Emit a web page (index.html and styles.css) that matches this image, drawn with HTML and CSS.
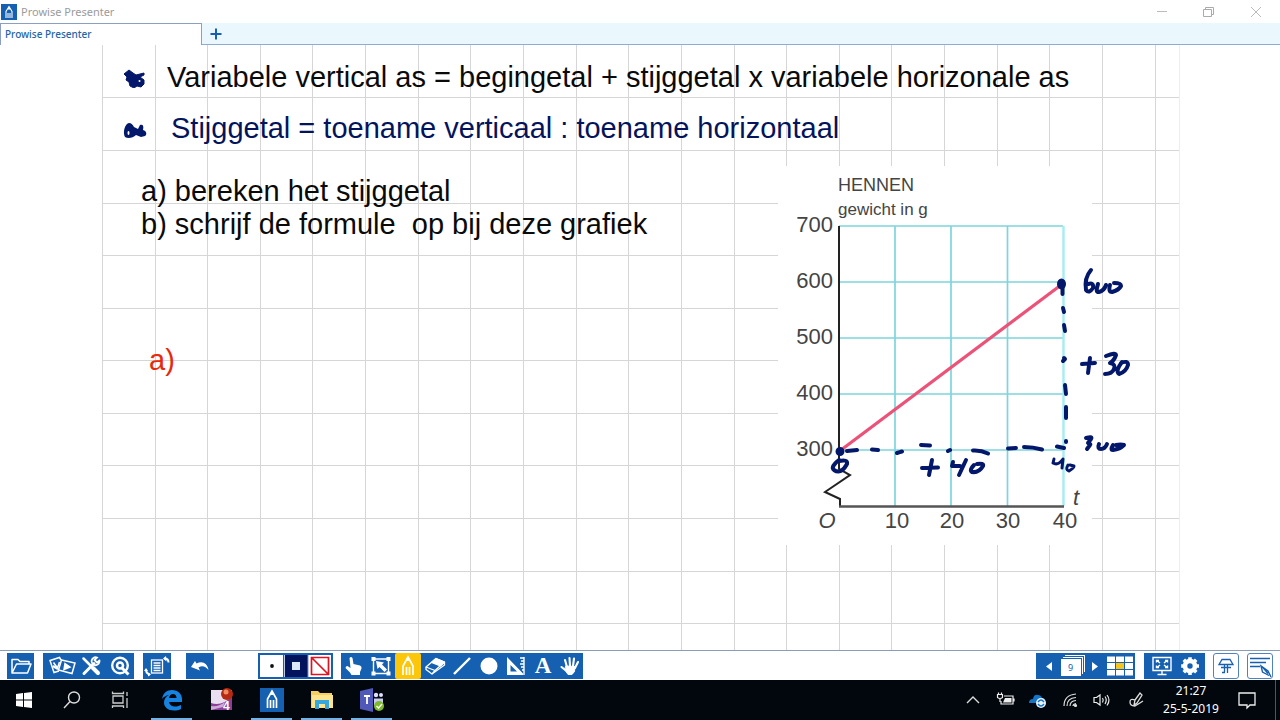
FILE: index.html
```html
<!DOCTYPE html>
<html lang="nl">
<head>
<meta charset="utf-8">
<meta name="viewport" content="width=device-width, initial-scale=1">
<title>Prowise Presenter</title>
<link rel="stylesheet" href="styles.css">
</head>
<body>
<header class="titlebar">
  <svg class="app-logo" width="16" height="16" viewBox="0 0 16 16"><rect width="16" height="16" fill="#1560b0"/><path d="M5 14V7.500l3-5 3 5V14M7 14V9M9 14V9M8 3v3" fill="none" stroke="#fff" stroke-width="1.100"/></svg>
  <span class="app-title">Prowise Presenter</span>
  <div class="window-controls">
    <button type="button" aria-label="Minimaliseren"><svg width="12" height="12" viewBox="0 0 12 12"><path d="M1 5.500h10" stroke="#bbb"/></svg></button>
    <button type="button" aria-label="Verkleinen"><svg width="12" height="12" viewBox="0 0 12 12" fill="none" stroke="#aaa"><path d="M0.500 3.500h8v7h-8zM2.500 3V1.500h8v7H9"/></svg></button>
    <button type="button" aria-label="Sluiten"><svg width="12" height="12" viewBox="0 0 12 12"><path d="M1 1l10 10M11 1L1 11" stroke="#bbb"/></svg></button>
  </div>
</header>
<nav class="tabs">
  <button type="button" class="tab">Prowise Presenter</button>
  <button type="button" class="new-tab" aria-label="Nieuw tabblad"><svg width="12" height="12" viewBox="0 0 12 12"><path d="M6 0.500v11M0.500 6h11" stroke="#1560b0" stroke-width="2"/></svg></button>
</nav>
<main class="stage">
  <section class="board">
    <svg class="board-grid" aria-hidden="true">
      <defs><pattern id="squares" width="1000" height="1000" patternUnits="userSpaceOnUse">
        <path d="M0.500 0V1000M53.500 0V1000M105.500 0V1000M158.500 0V1000M210.500 0V1000M263.500 0V1000M316.500 0V1000M368.500 0V1000M421.500 0V1000M474.500 0V1000M526.500 0V1000M579.500 0V1000M632.500 0V1000M684.500 0V1000M737.500 0V1000M789.500 0V1000M842.500 0V1000M895.500 0V1000M947.500 0V1000M0 52.500H1000M0 105.500H1000M0 158.500H1000M0 210.500H1000M0 263.500H1000M0 315.500H1000M0 368.500H1000M0 420.500H1000M0 473.500H1000M0 526.500H1000M0 578.500H1000M0 631.500H1000M0 684.500H1000M0 736.500H1000M0 789.500H1000M0 842.500H1000M0 894.500H1000M0 947.500H1000" stroke="#d6d6d6"/>
      </pattern></defs>
      <rect width="100%" height="100%" fill="url(#squares)"/>
    </svg>
    <div class="notes">
      <p class="rule"><svg class="blob" width="24" height="20" viewBox="0 0 24 20"><path d="M1 6l5-4 4 3 3 2 8-2v2l-4 2 4 3v4l-3 3-4-1-3 2-4-2-1-4-3-2 1-3z" fill="#04186b" stroke="#04186b" stroke-linejoin="round"/><circle cx="16.500" cy="13" r="1" fill="#fff"/></svg><span>Variabele vertical as = begingetal + stijggetal x variabele horizonale as</span></p>
      <p class="rule rule-blue"><svg class="blob" width="24" height="20" viewBox="0 0 24 20"><path d="M2 18c-2-4-1-10 2-13 2-2 5-1 7 3l4 2 2-4c3-1 4 1 3 5 4 1 4 5 2 6l-4 1-5-2c-3 3-8 4-11 2z" fill="#04186b"/><ellipse cx="5.500" cy="14" rx="1" ry="2" fill="#fff"/></svg><span>Stijggetal = toename verticaal : toename horizontaal</span></p>
      <p class="task">a) bereken het stijggetal<br>b) schrijf de formule&nbsp; op bij deze grafiek</p>
      <p class="answer">a)</p>
    </div>
    <svg class="chart" width="380" height="379" viewBox="778 166 380 379" role="img" aria-label="Hennen, gewicht in g">
      <rect x="778" y="166" width="314" height="379" fill="#fff"/>
      <path d="M839 226H1063M839 282H1063M839 338H1063M839 394H1063M839 450H1063M895 226V506M951 226V506M1007.500 226V506" fill="none" stroke="#7ed5dc" stroke-width="1.700"/>
      <path d="M1063.500 226V506" stroke="#a4edf0" stroke-width="2.400"/>
      <path d="M839 226V469L850 475L825 492L840 499V506" fill="none" stroke="#222" stroke-width="2"/>
      <path d="M839 506.500H1064" stroke="#555" stroke-width="2.400"/>
      <path d="M841 450L1065 282" stroke="#ec5277" stroke-width="3.200"/>
      <g class="chart-head"><text x="838" y="191">HENNEN</text></g>
      <g class="chart-sub"><text x="838" y="215">gewicht in g</text></g>
      <g class="chart-num chart-y"><text x="833" y="232">700</text><text x="833" y="288">600</text><text x="833" y="344">500</text><text x="833" y="400">400</text><text x="833" y="456">300</text></g>
      <g class="chart-num chart-x"><text x="897" y="528">10</text><text x="952" y="528">20</text><text x="1008" y="528">30</text><text x="1065" y="528">40</text></g>
      <g class="chart-num chart-x chart-it"><text x="827" y="528">O</text><text x="1076" y="505">t</text></g>
      <g class="ink">
        <path d="M847 451L857 450M872 449.500L878 450M897 453Q900 452 902 451.500M921 445L930 445.500M948 451L950 450M973 450.500Q981 450 988 453.500M1008 448.500L1016 448M1024 447Q1033 447 1042 449.500M1057 446.500L1064 448"/>
        <path d="M1062.500 288V294M1063 308L1064 312M1064 325L1065 331M1064 358L1065 359L1063 361M1065 385L1066 394M1066 407V418M1066 441V442"/>
        <circle cx="840" cy="451.500" r="3"/><ellipse cx="1061.500" cy="284" rx="3" ry="4"/>
        <path d="M839 460Q830 467 834 470Q841 475 847 464Q848 459 839 461"/>
        <path d="M922 468L938 467.500M932 460L929 475M953 462L952 466L960 466M966 460L959 475M974 465Q969 470 972 472Q979 473 983 466Q984 463 977 464"/>
        <path class="fine" d="M1054 459L1053 463Q1058 466 1063 459L1062 468M1068 465Q1065 470 1069 471Q1074 468 1074 466L1070 465"/>
        <path d="M1091 270Q1084 278 1086 290Q1089 294 1093 288Q1094 282 1088 284M1098 284Q1095 293 1099 292Q1104 291 1106 285M1110 285Q1108 292 1112 292Q1119 290 1121 286Q1121 283 1114 283"/>
        <path d="M1082 364L1095 363M1090 358L1088 373M1106 356Q1116 352 1116 355Q1114 361 1110 363Q1116 364 1114 369Q1112 374 1105 374M1122 362Q1115 371 1119 374Q1126 372 1128 365Q1128 360 1121 363"/>
        <path d="M1086 438Q1093 436 1091 439L1088 443Q1091 444 1090 445L1087 449M1099 444Q1097 449 1101 449Q1105 449 1107 444M1113 445Q1110 450 1113 450Q1120 449 1124 445Q1121 444 1116 445"/>
      </g>
    </svg>
  </section>
</main>
<div class="toolbar">
  <div class="group w27"><button type="button" aria-label="Openen"><svg viewBox="0 0 24 24" fill="none" stroke="#fff" stroke-width="1.500" stroke-linejoin="round"><path d="M3 19V5.500h6l2 2h9V10M3 19h15.500l3.500-9H7.500z"/></svg></button></div>
  <div class="group group-media">
    <button type="button" aria-label="Media"><svg class="wide" viewBox="0 0 28 24" fill="none" stroke="#fff" stroke-width="1.500"><path d="M13 6L11.500 3.500 2 6.500l4 12 5-1.500M5.500 8.500l4 5.500 2-6"/><path d="M13.500 6L27 9l-3 10.500-13.500-3.500z"/><path d="M17 9.500l5 3.500-6 2.500z" fill="#fff"/><path d="M5 12l5 3" stroke-width="2.500"/></svg></button>
    <button type="button" aria-label="Gereedschap"><svg viewBox="0 0 24 24" fill="none" stroke="#fff" stroke-linecap="round"><path d="M4.500 4.500L12 12" stroke-width="2.500"/><path d="M14 14l5 5" stroke-width="4"/><path d="M5 19.500L15 9.500" stroke-width="3"/><path d="M20.500 6.500L18 8.500l-2.500-2.500L18 3.500a4 4 0 1 0 2.500 3" stroke-width="1.800"/></svg></button>
    <button type="button" aria-label="Zoeken"><svg viewBox="0 0 24 24" fill="none" stroke="#fff"><circle cx="12" cy="11.500" r="7.800" stroke-width="2.400"/><circle cx="12" cy="11.500" r="3" stroke-width="2.500"/><path d="M14 14l6.500 6.500" stroke-width="3"/></svg></button>
  </div>
  <div class="group w28"><button type="button" aria-label="Pagina draaien"><svg class="wide" viewBox="0 0 28 24" fill="none" stroke="#fff" stroke-width="1.300"><rect x="8.500" y="6" width="11" height="13"/><path d="M10.500 9h7M10.500 11.500h7M10.500 14h7M10.500 16.500h7"/><path d="M21.500 4.500q4 0 4 4M3 15q0 5 4 5.500" stroke-width="2"/><path d="M23 2l-3 2.500 3.500 3zM1 17l2-3 2 3zM5 18.500l3 2-3 2z" fill="#fff" stroke="none"/></svg></button></div>
  <div class="group w28 group-undo"><button type="button" aria-label="Ongedaan maken"><svg viewBox="0 0 24 24"><path d="M3 13l4-6 1.500 2.500c6-3 11 0 12 6.500-3-4-6.500-5-10-2.500l1.500 3z" fill="#fff"/></svg></button></div>
  <div class="group group-colors">
    <button type="button" class="swatch" aria-label="Dikte"><svg viewBox="0 0 24 24"><circle cx="12" cy="12" r="1.900" fill="#111"/></svg></button>
    <button type="button" class="swatch swatch-navy" aria-label="Lijnkleur"><svg viewBox="0 0 24 24"><path d="M8 8h8v8H8z" fill="#dce6fa"/></svg></button>
    <button type="button" class="swatch" aria-label="Geen vulling"><svg viewBox="0 0 24 24"><path d="M3.500 3.500h17v17h-17zL20.500 20.500" fill="none" stroke="#e11220" stroke-width="1.700"/></svg></button>
  </div>
  <div class="group group-tools">
    <button type="button" aria-label="Aanwijzen"><svg viewBox="0 0 24 24"><path d="M7.500 4q1.500-2 3 0l1 6 6.500 1.500q2 1 1.500 3L18 18v3H9.500L8 18.500 3.500 14q0-2 2-2l3 2z" fill="#fff"/></svg></button>
    <button type="button" aria-label="Selecteren"><svg viewBox="0 0 24 24"><path d="M4.500 5h15v14.500h-15z" fill="none" stroke="#fff" stroke-width="1.400"/><path d="M2.500 3h4v4h-4zM17.500 3h4v4h-4zM2.500 17.500h4v4h-4zM17.500 17.500h4v4h-4zM7 7l8 1.500-2 2 5 5-2.500 2.500-5-5-2 2z" fill="#fff"/></svg></button>
    <button type="button" class="active" aria-label="Pen"><svg viewBox="0 0 24 24" fill="none" stroke="#fff" stroke-width="1.700"><path d="M7 21v-9l5-9 5 9v9M10.500 21v-8M13.500 21v-8M12 4v3"/></svg></button>
    <button type="button" aria-label="Gum"><svg viewBox="0 0 24 24" fill="none" stroke="#fff" stroke-width="1.300" stroke-linejoin="round"><path d="M3 13L13 4.500l8.500 3.500-9.500 8.500z"/><path d="M8.500 8.500l9 3.500 4-4L13 4.500z" fill="#fff"/><path d="M3 13v2.500l6 4.500 3-3.500M9 20l12.500-9V8"/></svg></button>
    <button type="button" aria-label="Lijn"><svg viewBox="0 0 24 24"><path d="M4 20L20 4" stroke="#fff" stroke-width="2.400"/></svg></button>
    <button type="button" aria-label="Vorm"><svg viewBox="0 0 24 24"><circle cx="12" cy="12" r="8.500" fill="#fff"/></svg></button>
    <button type="button" aria-label="Geodriehoek"><svg viewBox="0 0 24 24"><path d="M3 3l16 16.500v1.500H3zM6.500 11v6.500H13z" fill="#fff" fill-rule="evenodd"/><path d="M20 3v18M16 4h4M17 7h3M16 10h4M17 13h3M18 16h2" stroke="#fff" stroke-width="1.400"/></svg></button>
    <button type="button" class="letter">A</button>
    <button type="button" aria-label="Hand"><svg viewBox="0 0 24 24" fill="none" stroke="#fff" stroke-linecap="round" stroke-width="2.100"><path d="M9 13L7 6M12 12l-.5-8M15 12l1-7.500M17 14l3-6M8.500 17l-5-4"/><path d="M8 12l9 .5-.5 5-2.500 3h-4L7 16z" fill="#fff" stroke-width="1"/></svg></button>
  </div>
  <div class="group group-pages">
    <button type="button" class="arrow" aria-label="Vorige pagina"><svg viewBox="0 0 24 24"><path d="M15 8v9l-6-4.500z" fill="#fff"/></svg></button>
    <button type="button" class="page-no"><span>9</span></button>
    <button type="button" class="arrow" aria-label="Volgende pagina"><svg viewBox="0 0 24 24"><path d="M9 8v9l6-4.500z" fill="#fff"/></svg></button>
    <button type="button" class="overview" aria-label="Overzicht"><svg class="wide" viewBox="0 0 28 24"><path d="M1 2.500h26v19H1z" fill="#fff"/><path d="M10 9h8v6h-8z" fill="#f7c51a"/><path d="M1 8.500h26M1 15.500h26M9.500 2v20M18.500 2v20" stroke="#1560b0"/></svg></button>
  </div>
  <div class="group group-screen">
    <button type="button" aria-label="Volledig scherm"><svg viewBox="0 0 24 24" fill="none" stroke="#fff" stroke-width="1.400"><path d="M3 3.500h18v13H3zM12 17v3M7.500 20.500h9"/><path d="M7 6.500l3 2.500M17 6.500L14 9M7 13.500l3-2.500M17 13.500L14 11M6.500 8.500v-2H9M15 6.500h2.500v2M6.500 11.500v2H9M15 13.500h2.500v-2"/></svg></button>
    <button type="button" aria-label="Instellingen"><svg viewBox="0 0 24 24" fill="none" stroke="#fff"><circle cx="12" cy="12" r="5" stroke-width="4.600"/><path d="M12 3.200v4M12 17v4M3.200 12h4M17 12h4M5.800 5.800l3 3M15.300 15.300l3 3M18.200 5.800l-3 3M8.800 15.300l-3 3" stroke-width="3.600"/></svg></button>
  </div>
  <button type="button" class="outlined" aria-label="Gereedschapskist"><svg viewBox="0 0 24 24" fill="none" stroke="#1560b0" stroke-width="1.300"><path d="M8 5.500h8l3 5H5zM7 13.500h10M10.500 11v7M13.500 11v8M8 18.500h3"/></svg></button>
  <button type="button" class="outlined" aria-label="Notities"><svg viewBox="0 0 24 24" fill="none" stroke="#1560b0" stroke-width="1.400"><path d="M2 4.500h20M2 8.500h16M2 12.500h10M23 23l-3-6-7-5 1.500 6 6.500 3.500M14 12.500l6 7"/></svg></button>
</div>
<footer class="taskbar">
  <button type="button" class="sys" aria-label="Start"><svg viewBox="0 0 24 24"><path d="M4 6l7-1v6.500H4zM12 5l8-1v7.500h-8zM4 12.500h7V19l-7-1zM12 12.500h8V20l-8-1z" fill="#fff"/></svg></button>
  <button type="button" class="sys" aria-label="Zoeken"><svg viewBox="0 0 24 24" fill="none" stroke="#ddd" stroke-width="1.400"><circle cx="14" cy="9.500" r="5.500"/><path d="M10 13.500L4 20"/></svg></button>
  <button type="button" class="sys sys-view" aria-label="Taakweergave"><svg viewBox="0 0 24 24" fill="none" stroke="#ccc" stroke-width="1.300"><path d="M5 8h10v7H5zM4.500 3.500v2h11v-2M4.500 20v-2h11v2M19 4v4M19 10v10"/></svg></button>
  <button type="button" class="app running" aria-label="Edge"><svg viewBox="0 0 24 24"><path d="M2 11C3 5 7 2 12 2c6 0 10 4 10 9v3H9c.5 3 3 4.500 6 4.500 2.500 0 4.500-.6 6-1.500v4c-2 1-4.500 1.500-7 1.500-6 0-10-3.500-10-8 0-3.500 2-6 5-7.500-3 .5-5.500 2-7 4zM9 10h7.500c0-2.500-1.500-4-3.500-4s-3.500 1.500-4 4z" fill="#1683e0"/></svg></button>
  <button type="button" class="app" aria-label="Presentatie 4"><svg viewBox="0 0 24 24"><path d="M1 2h21v20H1z" fill="#e9dff0"/><path d="M1 15q11 4 21-7v14H1z" fill="#8c3d99"/><path d="M1 18q8 1 14-4l-2 5-12 3z" fill="#cfaad5"/><circle cx="17" cy="6" r="6" fill="#b52a12"/><circle cx="16" cy="4" r="2.500" fill="#f18b63"/><text x="13" y="22" class="icon-four">4</text></svg></button>
  <button type="button" class="app running" aria-label="Prowise Presenter"><svg viewBox="0 0 24 24"><path d="M0 0h24v24H0z" fill="#1560b0"/><path d="M7.500 20v-9L12 3l4.500 8v9M10.500 20v-8M13.500 20v-8M12 3v4" fill="none" stroke="#fff" stroke-width="1.700"/></svg></button>
  <button type="button" class="app running" aria-label="Verkenner"><svg viewBox="0 0 24 24"><path d="M1 3h7l2 2h12v15H1z" fill="#f5cf62"/><path d="M2 7h21v13H2z" fill="#fde48f"/><path d="M5 12h14v9h-4v-5H9v5H5z" fill="#38a8dc"/></svg></button>
  <button type="button" class="app running" aria-label="Teams"><svg class="wide" viewBox="0 0 28 24"><path d="M2 3l13-3v24L2 21z" fill="#5059b8"/><path d="M6 8h6M9 8v8" stroke="#fff" stroke-width="1.800"/><circle cx="18" cy="7" r="2.200" fill="#dfe0ff"/><circle cx="23" cy="7" r="2" fill="#dfe0ff"/><path d="M16 10.500h9v7h-9z" fill="#c9cbf0"/><circle cx="21" cy="18" r="5" fill="#7cba2c"/><path d="M18.500 18l2 2 3.500-4" fill="none" stroke="#fff" stroke-width="1.400"/></svg></button>
  <div class="tray">
    <button type="button" aria-label="Meer"><svg viewBox="0 0 24 24"><path d="M6 15l6-6 6 6" fill="none" stroke="#ddd" stroke-width="1.400"/></svg></button>
    <button type="button" aria-label="Batterij"><svg viewBox="0 0 24 24" fill="none" stroke="#eee" stroke-width="1.200"><path d="M11 8h9v8H8v-3M21 10.500v3"/><path d="M12 10h6.500v4.500H10z" fill="#eee" stroke="none"/><path d="M4.500 6.500h5v3q-2.500 2-5 0zM7 11v3M5.500 4.500v2M8.500 4.500v2"/></svg></button>
    <button type="button" aria-label="OneDrive"><svg viewBox="0 0 24 24"><path d="M4 15q0-4 4-4 1-5 5-4 3 0 4 3 4 0 3 5z" fill="#1474c8"/><circle cx="16" cy="15" r="5" fill="#e9f4ff"/><path d="M13 14q3-4 6 0M13 16q3 4 6 0" fill="none" stroke="#1474c8" stroke-width="1.300"/></svg></button>
    <button type="button" aria-label="Netwerk"><svg viewBox="0 0 24 24" fill="none" stroke="#ddd" stroke-width="1.200"><path d="M7 18Q7 7 19 6M10 18q0-8 9-8.500M13 18q0-5 6-5.500M16 18q0-2 3-2.500"/><circle cx="18.500" cy="17.500" r="1" fill="#ddd"/></svg></button>
    <button type="button" aria-label="Volume"><svg viewBox="0 0 24 24" fill="none" stroke="#eee" stroke-width="1.200"><path d="M5 9.500h2.500L11 7v10l-3.500-2.500H5zM13.500 10q1.500 2 0 4.500M16 8.500q2.500 3.500 0 7.500M18 7q4 5 0 10.500"/></svg></button>
    <button type="button" class="pen" aria-label="Pen"><svg viewBox="0 0 24 24" fill="none" stroke="#ddd" stroke-width="1.300"><path d="M11 12l5-7 2 2-5 8-3 2 1-5q-5-2-5 2t5 4q5-3 8-5"/></svg></button>
    <div class="clock"><time>21:27</time><time>25-5-2019</time></div>
    <button type="button" class="notify" aria-label="Meldingen"><svg viewBox="0 0 24 24" fill="none" stroke="#eee" stroke-width="1.300"><path d="M4 5h16v12h-5l-3 3v-3H4z"/></svg></button>
  </div>
</footer>
</body>
</html>
```
FILE: styles.css
```css
* { box-sizing: border-box; }
body {
  margin: 0;
  min-height: 100vh;
  display: flex;
  flex-direction: column;
  background: #fff;
  font-family: "Noto Sans", "Open Sans", sans-serif;
  font-size: 12px;
}
button {
  display: flex;
  align-items: center;
  justify-content: center;
  padding: 0;
  border: 0;
  background: none;
  font: inherit;
  color: inherit;
}
svg { display: block; flex: none; }

.titlebar { display: flex; align-items: center; height: 23px; padding-left: 1px; color: #9b9b9b; font-size: 11px; }
.app-title { padding-left: 4px; }
.window-controls { display: flex; margin-left: auto; padding-right: 1px; }
.window-controls button { width: 47px; height: 22px; }

.tabs { display: flex; height: 22px; background: #eaf8fd; border-bottom: 1px solid #8fabd4; }
.tab {
  width: 202px;
  height: 22px;
  justify-content: flex-start;
  padding: 0 0 2px 4px;
  background: #fff;
  border: 1px solid #8b9fc4;
  border-bottom: 0;
  color: #2365a8;
  font-size: 10px;
  font-weight: 500;
}
.new-tab { width: 28px; }

.stage { flex: 1; display: flex; padding: 0 100px 0 102px; }
.board {
  position: relative;
  flex: 1;
  border-right: 1px solid #eee;
  font-family: "Liberation Sans", Arial, sans-serif;
  font-size: 29px;
  line-height: 33px;
  color: #0a0a0a;
}
.board-grid { position: absolute; inset: 0; width: 100%; height: 100%; }
.notes { position: relative; padding: 16px 0 0 21px; }
.notes p { margin: 0; white-space: nowrap; }
.rule { display: flex; align-items: center; gap: 20px; }
.notes .rule-blue { margin-top: 18px; gap: 24px; color: #04145c; }
.notes .task { padding-left: 18px; margin-top: 30px; }
.notes .answer { padding-left: 26px; margin-top: 103px; color: #e8290b; }
.chart { position: absolute; left: 676px; top: 121px; fill: #444; }
.chart-head { font-size: 18px; }
.chart-sub { font-size: 17px; }
.chart-num { font-size: 22px; }
.chart-y { text-anchor: end; }
.chart-x { text-anchor: middle; }
.chart-it { font-style: italic; }
.ink path { fill: none; stroke: #04186b; stroke-width: 4; stroke-linecap: round; stroke-linejoin: round; }
.ink .fine { stroke-width: 3; }
.ink circle, .ink ellipse { fill: #04186b; stroke: #04186b; stroke-width: 3; }

.toolbar { display: flex; align-items: center; height: 30px; padding: 0 7px; border-top: 1px solid #8a9cb8; color: #fff; }
.toolbar svg { width: 24px; height: 24px; }
.toolbar svg.wide { width: 28px; }
.group { display: flex; height: 26px; margin-right: 9px; background: #1560b0; }
.group button { width: 26px; }
.group.w27 button { width: 27px; }
.group.w28 button { width: 28px; }
.group-media { padding-left: 5px; gap: 1px; }
.group.group-media button { width: 28px; }
.group-undo { margin: 0 44px 0 6px; }
.group-colors { padding: 2px; gap: 1px; margin-right: 8px; }
.group-colors .swatch { width: 23px; background: #fff; }
.group-colors .swatch-navy { background: #04145c; }
.swatch + .swatch { border-left: 1px solid #b9c9e6; }
.group-tools { gap: 1px; }
.group-tools .active { background: #fcc70b; border-radius: 2px; }
.group-tools .letter { font-family: "Liberation Serif", serif; font-size: 23px; font-weight: 700; }
.group-pages { margin-left: auto; padding-left: 3px; }
.group-pages .arrow { width: 20px; }
.page-no span {
  width: 20px;
  height: 17px;
  margin: 3px 3px 0 0;
  background: #fff;
  box-shadow: 1px -1px 0 #1560b0, 2px -2px 0 #fff, 3px -3px 0 #1560b0, 4px -4px 0 #fff;
  color: #1560b0;
  font-size: 9px;
  line-height: 18px;
}
.group-pages .overview { width: 30px; }
.group-screen { padding: 0 1px 0 4px; margin-right: 8px; }
.group-screen button { width: 28px; }
.outlined { width: 26px; height: 26px; border: 1px solid #4f83c0; border-radius: 3px; background: #fff; }
.outlined + .outlined { margin-left: 8px; }

.taskbar { display: flex; height: 40px; background: #01070c; color: #fff; }
.taskbar svg { width: 24px; height: 24px; }
.taskbar svg.wide { width: 28px; }
.sys { width: 48px; }
.sys-view { margin-right: 3px; }
.app { width: 50px; position: relative; }
.running::after { content: ""; position: absolute; left: 4px; right: 5px; bottom: 0; height: 2px; background: #6cb4ec; }
.icon-four { font: 700 12px "Liberation Sans", sans-serif; fill: #fff; }
.tray { display: flex; margin-left: auto; margin-right: 4px; border-right: 1px solid #555; }
.tray button { width: 32px; }
.tray .pen { width: 38px; }
.clock { width: 72px; display: flex; flex-direction: column; justify-content: center; align-items: center; line-height: 18px; }
.tray .notify { width: 40px; margin-right: 8px; }
```
